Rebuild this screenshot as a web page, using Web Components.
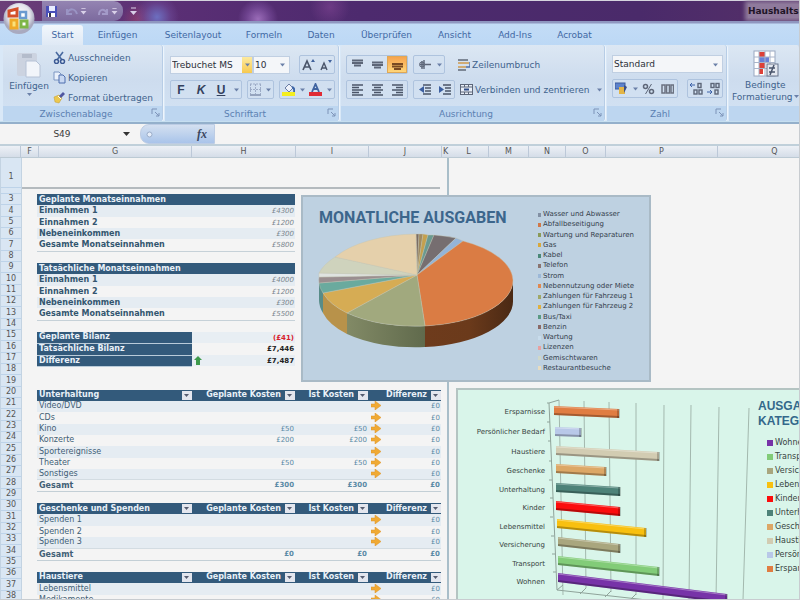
<!DOCTYPE html>
<html lang="de">
<head>
<meta charset="utf-8">
<title>Haushaltsbudget</title>
<style>
html, body { margin: 0; height: 100%; overflow: hidden; }
body { font-family: "DejaVu Sans", "Liberation Sans", sans-serif; font-size: 8px; background: #f4f4f4; color: #40628c; }
</style>
</head>
<body>
<app-window></app-window>
<script>
const define = (name, html, setup) => customElements.define(name, class extends HTMLElement {
  connectedCallback() {
    if (this.shadowRoot) return;
    const t = document.createElement('template');
    t.innerHTML = typeof html === 'function' ? html(this) : html;
    this.attachShadow({ mode: 'open' }).append(t.content.cloneNode(true));
    if (setup) setup(this);
  }
});
const rowHeight = n => n % 3 === 1 ? 12 : 11;
const reset = `*{box-sizing:border-box} button,select,input{font:inherit;color:inherit;border:0;background:none;padding:0;margin:0;appearance:none;border-radius:0} button{cursor:pointer}`;

/* Line and shape artwork of the ribbon */
const glyphs = {
  save: '<rect x="1" y="1" width="11" height="11" fill="#4a50b8"/><rect x="4" y="1" width="6" height="5" fill="#e8ecff"/><rect x="3" y="8" width="7" height="4" fill="#fff"/><rect x="4" y="8" width="2" height="4" fill="#334"/>',
  undo: '<path d="M2 4v5h5M2 8C5 3 10 3 12 9" fill="none" stroke="#9a94c4" stroke-width="2"/>',
  redo: '<path d="M11 4v5H6M11 8C8 3 3 4 3 10" fill="none" stroke="#a39ac8" stroke-width="2"/>',
  more: '<path d="M4 3h5" stroke="#d8d0e8" stroke-width="1"/><path d="M3 6h7L6.500 10z" fill="#d8d0e8"/>',
  down: '<path d="M4 5.500h5L6.500 8.500z" fill="#6b80a8"/>',
  cut: '<path d="M3 1l6 8M10 1L4 9" stroke="#4a6ba0" stroke-width="1.600"/><circle cx="3.500" cy="10.500" r="2" fill="none" stroke="#3b5994" stroke-width="1.500"/><circle cx="9.500" cy="10.500" r="2" fill="none" stroke="#3b5994" stroke-width="1.500"/>',
  copy: '<path d="M1 1h5l2 2v6H1z" fill="#e9f0fb" stroke="#7d96c2"/><path d="M6 4h4l2 2v6H6z" fill="#c8d8f2" stroke="#4f6fae"/>',
  brush: '<path d="M1 6l5-2 3 3-3 5-4-1z" fill="#ecc84e" stroke="#c09a30" stroke-width=".500"/><path d="M6 5l4-4 2 2-4 4z" fill="#4f56a0"/><path d="M5 5l3 3" stroke="#fff"/>',
  borders: '<path d="M1 1h11M1 6.500h11M1.500 1v10M6.500 1v10M11.500 1v10" stroke="#9cabc6" stroke-dasharray="2 1"/><path d="M1 12h11" stroke="#8090ac" stroke-width="1.500"/>',
  fill: '<path d="M3 5l4-4 4 4-4 4z" fill="#eef2fa" stroke="#6b7ea6"/><path d="M10 4q3 1 2 5" stroke="#3d66a8" stroke-width="2" fill="none"/><rect y="9" width="13" height="4" fill="#f4ee20"/>',
  fontcolor: '<path d="M3 9l3.500-8L10 9M4.500 6h4" fill="none" stroke="#3f63a0" stroke-width="1.800"/><rect y="9" width="13" height="4" fill="#e02b35"/>',
  grow: '<path d="M1 12L5 3l4 9M2.500 9h5" fill="none" stroke="#4a556a" stroke-width="1.700"/><path d="M9 4h4L11 1z" fill="#41629c"/>',
  shrink: '<path d="M2 12l3-7 3 7M3 10h4" fill="none" stroke="#4a556a" stroke-width="1.400"/><path d="M9 2h4l-2 3z" fill="#41629c"/>',
  top: '<path d="M1 2.500h11M1 5h11M3 7.500h7" stroke="#5d6678" stroke-width="2"/>',
  middle: '<path d="M1 4.500h11M1 7h11M3 9.500h7" stroke="#5d6678" stroke-width="2"/>',
  bottom: '<path d="M1 6h11M1 8.500h11M3 11h7" stroke="#7a4a22" stroke-width="2"/>',
  orient: '<path d="M2 6.500h4M4 3v8M6 2v9M7 6.500h6" stroke="#5d6678" stroke-width="1.400"/><circle cx="4" cy="6.500" r="2.500" fill="none" stroke="#5d6678"/>',
  left: '<path d="M1 2h11M1 4.500h7M1 7h11M1 9.500h7M1 12h11" stroke="#4b5568" stroke-width="1.500"/>',
  center: '<path d="M1 2h11M3 4.500h7M1 7h11M3 9.500h7M1 12h11" stroke="#4b5568" stroke-width="1.500"/>',
  right: '<path d="M1 2h11M5 4.500h7M1 7h11M5 9.500h7M1 12h11" stroke="#4b5568" stroke-width="1.500"/>',
  outdent: '<path d="M5 2h8M7 5h6M7 8h6M5 11h8" stroke="#4b5568" stroke-width="1.600"/><path d="M6 3v7L1 6.500z" fill="#3c5fa0"/>',
  indent: '<path d="M5 2h8M7 5h6M7 8h6M5 11h8" stroke="#4b5568" stroke-width="1.600"/><path d="M1 3v7l5-3.500z" fill="#3c5fa0"/>',
  wrap: '<path d="M1 2h10M1 12h8" stroke="#7d8796" stroke-width="1.800"/><path d="M1 5h11M1 9h8" stroke="#d09a4e" stroke-width="1.500"/><path d="M13 4v5h-4" stroke="#4d6ca4" fill="none" stroke-width="1.400"/>',
  merge: '<rect x=".500" y="1.500" width="12" height="10" fill="#e8eef8" stroke="#5c6679"/><path d="M1 4h12M1 9h12M4.500 1v3M8.500 1v3M4.500 9v3M8.500 9v3" stroke="#5c6679"/><path d="M4 6.500h5" stroke="#2f4c86" stroke-width="2"/>',
  currency: '<rect y="1" width="10" height="6" fill="#5c82cc" stroke="#3b5a9c"/><rect x="4" y="5" width="6" height="7" fill="#e3b546"/><path d="M9 3l3 2-3 6" fill="#3b4f86"/>',
  percent: '<circle cx="3.500" cy="4.500" r="2" fill="none" stroke="#5d6678" stroke-width="1.500"/><circle cx="9.500" cy="9.500" r="2" fill="none" stroke="#5d6678" stroke-width="1.500"/><path d="M9.500 2l-6 10" stroke="#5d6678"/>',
  thousand: '<g fill="none" stroke="#6b7280" stroke-width="1.500"><rect x="1" y="3" width="3" height="8"/><rect x="5.500" y="3" width="3" height="8"/><rect x="10" y="3" width="2.500" height="8"/></g>',
  decplus: '<path d="M0 3h5M2 1L0 3l2 2" stroke="#3c62a8" fill="none"/><g fill="none" stroke="#5d6678" stroke-width="1.400"><rect x="8" y="1.500" width="3" height="4"/><rect x="4" y="8" width="3" height="4"/><rect x="9" y="8" width="3" height="4"/></g>',
  decminus: '<path d="M0 10h5M3 8l2 2-2 2" stroke="#3c62a8" fill="none"/><g fill="none" stroke="#5d6678" stroke-width="1.400"><rect x="4" y="1.500" width="3" height="4"/><rect x="9" y="1.500" width="3" height="4"/><rect x="8" y="8" width="3" height="4"/></g>',
  launch: '<path d="M3 8V3h5M6 6l4 4M10 7v3H7" fill="none" stroke="#7d93b8"/>',
};
const glyph = n => `<svg width="13" height="13" viewBox="0 0 13 13" aria-hidden="true">${glyphs[n]}</svg>`;

/* Ribbon button: icon plus optional slotted caption */
define('tool-button', el => `<style>${reset}:host{display:flex;flex:none}svg{flex:none}
button{display:flex;align-items:center;justify-content:center;gap:2px;min-width:20px;height:17px;line-height:12px;white-space:nowrap}
:host([small]) button{min-width:10px;width:10px;overflow:hidden} :host([mid]) button{min-width:17px} :host([slim]) button{min-width:15px}
:host([active]) button{background:linear-gradient(#f6a04b,#ffd97c);box-shadow:inset 0 0 0 1px #e0a856}
:host([text]) button{color:#34425e;font:bold 12px "Liberation Sans",sans-serif}</style>
<button ${el.getAttribute('label') ? `aria-label="${el.getAttribute('label')}"` : ''}>${el.getAttribute('icon') ? glyph(el.getAttribute('icon')) : ''}<slot></slot></button>`);

define('tool-set', `<style>:host{display:flex;flex:none;align-items:center;border:1px solid #aec3de;border-radius:2px;background:#d3e1f280;height:19px;box-sizing:border-box}</style><slot></slot>`);

define('pick-list', el => `<style>${reset}:host{display:flex;background:#f4f6f9;height:18px;border:1px solid #c0cfe2;color:#2b2f38;box-sizing:border-box}
label{display:flex;flex:1;min-width:0}select{flex:1;min-width:0;padding-left:1px;height:16px;line-height:16px;outline:none}
span{display:flex;align-items:center;width:13px;flex:none}:host([hot]) span{background:linear-gradient(#fdeaa0,#f7c94f);width:10px;justify-content:center;overflow:hidden}svg{flex:none}</style>
<label><select aria-label="${el.getAttribute('label')}"><option>${el.getAttribute('value')}</option></select><span>${glyph('down')}</span></label>`);

define('ribbon-group', el => `<style>${reset}:host{display:flex;flex-direction:column;flex:none;box-sizing:border-box;border-right:1px solid #b7cde6;border-radius:3px;background:linear-gradient(#dce7f3,#cddcee 45%,#d3e3f4);box-shadow:1px 0 #eef5fc}
.body{flex:1;min-height:0;padding:4px 3px 0 5px}:host([plain]) .body{padding:4px 0 0 3px} footer{display:flex;align-items:center;height:15px;background:#bdd6f0;color:#5b80b2;line-height:12px}
footer span{flex:1;text-align:center}</style><div class="body"><slot></slot></div><footer><span>${el.getAttribute('label')}</span>${el.hasAttribute('plain') ? '' : `<button aria-label="Mehr">${glyph('launch')}</button>`}</footer>`);

define('title-bar', `<style>${reset}:host{display:flex;align-items:center;height:21px;flex:none;border-top:1px solid #d5d3de;box-sizing:border-box;padding-left:42px;
background:radial-gradient(circle at 157px 16px,#6d6fc0 0,#6d4c9a80 14px,transparent 22px),radial-gradient(circle at 138px 18px,#b0486a80 0,transparent 16px),radial-gradient(circle at 258px 18px,#9a6cb8 0,#8456a880 12px,transparent 20px),radial-gradient(circle at 330px 6px,#8a4a9a80 0,transparent 20px),linear-gradient(90deg,#6b3f78,#5b2f75 20%,#4d2a6e 45%,#4a2a6a 80%,#553068)}
nav{display:flex;align-items:center;height:20px;padding:0 3px;margin-right:4px;border-radius:0 9px 9px 0;background:linear-gradient(#9484b2,#7c6a9e);width:81px}
h1{margin:0 0 0 auto;width:51px;font:bold 9px/14px "DejaVu Sans",sans-serif;color:#1e1426;white-space:nowrap;overflow:hidden;background:#8f7a9c;box-shadow:0 0 4px 3px #8f7a9c;height:14px}
button{display:flex}.s{width:11px;overflow:hidden}.gap{margin-left:auto}</style>
<nav><button aria-label="Speichern">${glyph('save')}</button><button class="gap" aria-label="Rückgängig">${glyph('undo')}</button><button class="s" aria-label="Rückgängig-Liste">${glyph('more')}</button><button class="gap" aria-label="Wiederholen">${glyph('redo')}</button><button class="s" aria-label="Wiederholen-Liste">${glyph('more')}</button></nav>
<button aria-label="Symbolleiste anpassen">${glyph('more')}</button><h1>Haushaltsbudget</h1>`);

define('office-button', `<style>${reset}:host{position:absolute;left:3px;top:2px;z-index:2}button,svg{display:block}</style>
<button aria-label="Office"><svg width="33" height="33" viewBox="0 0 33 33"><defs><radialGradient id="g" cy=".4"><stop offset="0" stop-color="#fff"/><stop offset=".7" stop-color="#e4e4ec"/><stop offset="1" stop-color="#a9aabf"/></radialGradient></defs>
<circle cx="16" cy="16.500" r="15.500" fill="url(#g)"/><path d="M6 9l8-2v7H6z" fill="#fff" stroke="#d4502a" stroke-width="3"/><path d="M17 10h6v6h-6z" fill="#fff" stroke="#6a9ad0" stroke-width="2.500"/><path d="M8 18h6v8H8z" fill="#fbe27a" stroke="#f0aa28" stroke-width="3"/><path d="M18 19h6v6h-6z" fill="#fff" stroke="#7eb648" stroke-width="3"/></svg></button>`);

define('ribbon-tabs', `<style>${reset}:host{display:flex;height:24px;flex:none;align-items:flex-end;background:linear-gradient(#8f97c0 0,#8f97c0 2px,#c3dcf6 3px,#bcd8f5);padding-left:42px;font-size:9px}
button{height:20px;line-height:18px;flex:none;color:#3f68a4;white-space:nowrap} [aria-selected=true]{background:linear-gradient(#f2f7fc,#dfe9f5);border-radius:3px 3px 0 0}</style>
${[['Start', 41], ['Einfügen', 69], ['Seitenlayout', 82], ['Formeln', 60], ['Daten', 54], ['Überprüfen', 77], ['Ansicht', 59], ['Add-Ins', 62], ['Acrobat', 57]].map(([t, w], i) => `<button role="tab" aria-selected="${!i}" style="width:${w}px">${t}</button>`).join('')}`);

define('app-ribbon', `<style>${reset}:host{display:flex;flex:none;box-sizing:border-box;height:77px;padding-left:3px;gap:2px;background:#d9e8f7;border-bottom:1px solid #c6dff0;font-size:9px}
.row{display:flex;align-items:center;gap:5px;margin-top:6px}.clip{display:grid;grid-template-columns:45px 1fr}.list{display:grid;grid-auto-rows:20px;justify-items:start}
.paste{display:flex;flex-direction:column;align-items:center;padding-top:2px;line-height:10px;margin-left:-3px}.cond{display:flex;flex-direction:column;align-items:center;line-height:12px;white-space:nowrap}
.fonts{display:flex}svg{display:block}.end{margin-left:auto}.arrow{display:flex;align-items:center;gap:1px}</style>
<ribbon-group label="Zwischenablage" style="width:160px"><div class="clip">
<button class="paste"><svg width="30" height="30" viewBox="0 0 30 30"><rect x="3" y="2" width="20" height="23" rx="2" fill="#ccd3e0"/><path d="M8 3h10v4H8z" fill="#b4bccb"/><path d="M12 10h10l4 4v12H12z" fill="#f2f5fa" stroke="#b6c2d6"/></svg>Einfügen<svg width="7" height="7"><path d="M1 2h5L3.500 5z" fill="#6b80a8"/></svg></button>
<div class="list"><tool-button icon="cut">Ausschneiden</tool-button><tool-button icon="copy">Kopieren</tool-button><tool-button icon="brush">Format übertragen</tool-button></div></div></ribbon-group>
<ribbon-group label="Schriftart" style="width:174px">
<div class="row"><div class="fonts"><pick-list hot label="Schriftart" value="Trebuchet MS" style="width:83px"></pick-list><pick-list label="Schriftgrad" value="10" style="width:37px"></pick-list></div><tool-set class="end"><tool-button mid icon="grow" label="Schrift vergrößern"></tool-button><tool-button mid icon="shrink" label="Schrift verkleinern"></tool-button></tool-set></div>
<div class="row"><tool-set><tool-button text>F</tool-button><tool-button text><i>K</i></tool-button><tool-button text><u>U</u></tool-button><tool-button small icon="down" label="Unterstreichungsart"></tool-button></tool-set><tool-set><tool-button slim icon="borders" label="Rahmen"></tool-button><tool-button small icon="down" label="Rahmenliste"></tool-button></tool-set><tool-set class="end"><tool-button mid icon="fill" label="Füllfarbe"></tool-button><tool-button small icon="down" label="Füllfarben"></tool-button><tool-button mid icon="fontcolor" label="Schriftfarbe"></tool-button><tool-button small icon="down" label="Schriftfarben"></tool-button></tool-set></div></ribbon-group>
<ribbon-group label="Ausrichtung" style="width:264px">
<div class="row"><tool-set><tool-button icon="top" label="Oben"></tool-button><tool-button icon="middle" label="Mitte"></tool-button><tool-button active icon="bottom" label="Unten"></tool-button></tool-set><tool-set><tool-button icon="orient" label="Ausrichtung"></tool-button><tool-button small icon="down" label="Winkel"></tool-button></tool-set><tool-button icon="wrap" style="margin-left:7px">Zeilenumbruch</tool-button></div>
<div class="row"><tool-set><tool-button icon="left" label="Links"></tool-button><tool-button icon="center" label="Zentriert"></tool-button><tool-button icon="right" label="Rechts"></tool-button></tool-set><tool-set><tool-button icon="outdent" label="Einzug verkleinern"></tool-button><tool-button icon="indent" label="Einzug vergrößern"></tool-button></tool-set><tool-button icon="merge">Verbinden und zentrieren</tool-button><tool-button small class="end" icon="down" label="Verbinden-Liste"></tool-button></div></ribbon-group>
<ribbon-group label="Zahl" style="width:120px"><div class="row"><pick-list label="Zahlenformat" value="Standard" style="flex:1"></pick-list></div>
<div class="row"><tool-set><tool-button mid icon="currency" label="Währung"></tool-button><tool-button small icon="down" label="Währungen"></tool-button><tool-button mid icon="percent" label="Prozent"></tool-button><tool-button icon="thousand" label="Tausender"></tool-button></tool-set><tool-set class="end"><tool-button mid icon="decplus" label="Dezimalstelle hinzufügen"></tool-button><tool-button mid icon="decminus" label="Dezimalstelle löschen"></tool-button></tool-set></div></ribbon-group>
<ribbon-group plain label="" style="flex:1 0 70px"><button class="cond"><svg width="30" height="30" viewBox="0 0 30 30"><rect x="4" y="2" width="21" height="25" fill="#fff" stroke="#9aa8c0"/><path d="M9 3h6v5H9zM9 14h6v5H9zM9 20h4v5H9z" fill="#dd4038"/><path d="M9 8h10v5H9z" fill="#6a80d8"/><path d="M4 8h21M4 13.500h21M4 19.500h21M9 2v25M15 2v25M20 2v25" stroke="#a8b4ca"/><rect x="17" y="15" width="11" height="12" fill="#e4e8f0" stroke="#69748c"/><path d="M19 19h6M19 23h6M24 16l-4 10" stroke="#4a556c" stroke-width="1.500"/></svg><span>Bedingte</span><span class="arrow">Formatierung<svg width="5" height="4"><path d="M0 0h5L2.500 3z" fill="#6b80a8"/></svg></span></button></ribbon-group>`);

define('formula-bar', `<style>${reset}:host{display:flex;flex:none;box-sizing:border-box;height:24px;border-top:2px solid #94b0cb;border-bottom:2px solid #c0d0da;background:#f4f4f4;padding-left:2px}
input{font:9px "DejaVu Sans",sans-serif;color:#3a3a3a} .name{width:120px;text-align:center;outline:0}.dd{width:18px;display:flex;align-items:center}
.fx{width:75px;background:linear-gradient(#d4e0f0,#a9c4ea);border-radius:9px 0 0 9px;border:1px solid #bccce4;display:flex;align-items:center;justify-content:space-between;padding:0 7px 0 5px;font:italic bold 12px/14px "Liberation Serif",serif;color:#3a4760}
.val{flex:1;min-width:0;outline:0;padding-left:4px}</style><input class="name" aria-label="Namenfeld" value="S49"><button class="dd" aria-label="Namenliste"><svg width="9" height="6"><path d="M1 1h7L4.500 5z" fill="#333"/></svg></button>
<div class="fx"><svg width="7" height="7"><circle cx="3.500" cy="3.500" r="2.500" fill="#e6eefa" stroke="#9badc9"/></svg><button aria-label="Funktion einfügen">fx</button></div><input class="val" aria-label="Bearbeitungsleiste">`);

define('column-headings', `<style>:host{display:flex;flex:none;height:12px;background:linear-gradient(#edf1f6,#d5dde8);border-bottom:1px solid #bccad4;box-sizing:border-box;color:#555;line-height:11px}
span{flex:none;box-sizing:border-box;text-align:center;border-right:1px solid #bcc8d8}span:first-child{background:#a9c8ec}.k{border:0}span:last-child{flex:1 0 80px;padding-left:32px;border:0}</style>
${[['', 21], ['F', 18], ['G', 153], ['H', 104], ['I', 73], ['J', 73], ['K', 7], ['L', 40], ['M', 40], ['N', 37], ['O', 40], ['P', 112], ['Q', 80]].map(([t, w]) => `<span${t === 'K' ? ' class="k"' : ''} style="width:${w}px">${t}</span>`).join('')}`);

define('row-headings', `<style>:host{display:block;width:22px;background:#d9e6f3;color:#555;border-right:1px solid #c3d3e2;border-left:1px solid #c3d3e2;box-sizing:border-box}
div{box-sizing:border-box;border-bottom:1px solid #bdd3e9;text-align:center;line-height:10px;display:flex;justify-content:center;align-items:flex-end}</style>
<div style="height:30px;padding-bottom:5px">1</div><div style="height:6px"></div>
${Array.from({ length: 36 }, (_, i) => `<div style="height:${rowHeight(i + 3)}px">${i + 3}</div>`).join('')}`);

/* Cell blocks; "start" is the sheet row of the first table row */
const tableCss = `${reset}table{border-collapse:collapse;table-layout:fixed;width:100%}td,th{padding:0 1px 0 2px;line-height:10px;text-align:left;white-space:nowrap;vertical-align:middle;overflow:hidden;height:inherit}
td+td,th+th{text-align:right}th{background:#335a7b;color:#e9f1f8}tr:nth-child(even) td{background:#e5ecf2}td{color:#426076;font-weight:normal}td+td,th+td{font-size:7px}`;
define('income-table', el => {
  const s = +el.getAttribute('start'), d = JSON.parse(el.getAttribute('rows'));
  return `<style>${tableCss}:host{display:block;width:258px;border-bottom:1px solid #c6d1d8;box-sizing:border-box}td:first-child{font-weight:bold;color:#33566f}td+td{font-style:italic;color:#7a868e}</style>
<table><tr style="height:${rowHeight(s)}px"><th colspan="2">${el.getAttribute('heading')}</th></tr>${d.map((r, i) => `<tr style="height:${rowHeight(s + 1 + i)}px"><td>${r[0]}</td><td>${r[1]}</td></tr>`).join('')}</table>`;
});
define('balance-table', el => {
  const s = +el.getAttribute('start'), d = [['Geplante Bilanz', '(£41)'], ['Tatsächliche Bilanz', '£7,446'], ['Differenz', '£7,487']];
  return `<style>${tableCss}:host{display:block;width:258px}th{width:155px;border-bottom:1px solid #b9cbd9}td{font-weight:bold;color:#222}tr td,tr:nth-child(even) td{background:#e8eef3;text-align:right}tr:nth-child(even) td{background:#f4f4f4}tr:first-child td{color:#d8202c}svg{float:left}</style>
<table>${d.map((r, i) => `<tr style="height:${rowHeight(s + i)}px"><th scope="row">${r[0]}</th><td>${i === 2 ? '<svg width="8" height="9" viewBox="0 0 8 9"><path d="M4 0l4 4H6v5H2V4H0z" fill="#3f9a4c"/></svg>' : ''}${r[1]}</td></tr>`).join('')}</table>`;
});
define('cost-table', el => {
  const s = +el.getAttribute('start'), d = JSON.parse(el.getAttribute('rows'));
  const f = '<button aria-label="Filter"><svg width="9" height="9"><path d="M2 3h5L4.500 6z" fill="#555c70"/></svg></button>';
  const arrow = '<svg width="10" height="9" viewBox="0 0 10 9"><path d="M0 3h4V0l6 4.500L4 9V6H0z" fill="#f0aa34" stroke="#dc9226" stroke-width=".5"/></svg>';
  const head = (t, w) => `<th style="width:${w}px"><div><span>${t}</span>${f}</div></th>`;
  return `<style>${tableCss}:host{display:block;width:404px}th{padding-right:0}th div{display:flex;align-items:center}th span{flex:1;padding-right:4px}button{width:10px;height:9px;background:#e3e6ee;flex:none}button svg,td svg{display:block}td svg{float:left;margin-left:1px}
td+td{color:#5a8aa6}.sum td{font-weight:bold;border-top:1px solid #d3dce2;border-bottom:1px solid #c3cfd6;background:#f4f4f4!important;line-height:9px}</style>
<table><tr style="height:${rowHeight(s)}px">${head(el.getAttribute('heading'), 155)}${head('Geplante Kosten', 103)}${head('Ist Kosten', 73)}${head('Differenz', 73)}</tr>
${d.map((r, i) => `<tr style="height:${rowHeight(s + 1 + i)}px"${r[0] === 'Gesamt' ? ' class="sum"' : ''}><td>${r[0]}</td><td>${r[1]}</td><td>${r[2]}</td><td>${r[0] === 'Gesamt' ? '' : arrow}${r[3]}</td></tr>`).join('')}</table>`;
});
define('blank-rows', el => {
  const s = +el.getAttribute('start'), n = +el.getAttribute('count');
  let h = 0; for (let i = 0; i < n; i++) h += rowHeight(s + i);
  return `<style>:host{display:block;height:${h}px}</style>`;
});

/* Tilted pie with a solid rim */
define('pie-chart', () => {
  const rim = [[416, 234], [419, 234], [423, 234], [428, 235], [434, 235], [456, 238], [463, 241], [425, 326], [347, 313], [323, 293], [319, 283], [319, 277], [319, 273], [335, 257], [416, 234]];
  const fill = ['#7b6b62', '#a08a60', '#c4a04e', '#6a9a90', '#766e70', '#94b4d8', '#da7c44', '#a1a97e', '#d6ac54', '#6aaa9e', '#9a8e90', '#dfe3e0', '#cfd3bd', '#e5d0ab'];
  const legend = [['Wasser und Abwasser', '#8290a4'], ['Abfallbeseitigung', '#d07848'], ['Wartung und Reparaturen', '#8a9a58'], ['Gas', '#d8a83c'], ['Kabel', '#4a8878'], ['Telefon', '#8a7470'], ['Strom', '#9cb8d8'], ['Nebennutzung oder Miete', '#e08850'], ['Zahlungen für Fahrzeug 1', '#a0a868'], ['Zahlungen für Fahrzeug 2', '#e0b040'], ['Bus/Taxi', '#5a9a84'], ['Benzin', '#8a6a68'], ['Wartung', '#c8dcec'], ['Lizenzen', '#e8a0a0'], ['Gemischtwaren', '#d0d8c8'], ['Restaurantbesuche', '#e8dcc0']];
  return `<style>:host{display:grid;grid-template-columns:235px 1fr;box-sizing:border-box;border:2px solid #a9bac6;background:#bed1e1;width:350px;height:187px;color:#34404c}
h2{margin:12px 0 0 16px;font:bold 16px/17px Roboto,"Liberation Sans",sans-serif;color:#3c668c;white-space:nowrap}svg{display:block;margin:4px 0 0 12px}
ul{list-style:none;margin:13px 0 7px;padding:0;display:flex;flex-direction:column;justify-content:space-between;font-size:7px;line-height:9px;white-space:nowrap}li{display:flex;align-items:center;gap:2px}i{width:3px;height:4px}</style>
<div><h2>MONATLICHE AUSGABEN</h2><svg width="204" height="120" viewBox="315 230 204 120"><defs><linearGradient id="o"><stop stop-color="#6e3b1c"/><stop offset=".5" stop-color="#6b3a1b"/><stop offset="1" stop-color="#4a2914"/></linearGradient><linearGradient id="v"><stop stop-color="#828a66"/><stop offset="1" stop-color="#606a4c"/></linearGradient></defs>
<path d="M513 280v20A97 46 0 0 1 425 347V326A97 46 0 0 0 513 280z" fill="url(#o)"/><path d="M425 326v21A97 46 0 0 1 347 334V313A97 46 0 0 0 425 326z" fill="url(#v)"/><path d="M347 313v21A97 46 0 0 1 323 313V293A97 46 0 0 0 347 313z" fill="#b8924a"/><path d="M323 293v20A97 46 0 0 1 319 300V280z" fill="#588c88"/>
${fill.map((c, i) => `<path d="M417 275L${rim[i]}A97 46 0 ${i === 6 ? '0 1 513,280A97 46 0 0' : 0} 1 ${rim[i + 1]}z" fill="${c}" stroke="#c6c6b0" stroke-width=".4"/>`).join('')}</svg></div>
<ul>${legend.map(([t, c]) => `<li><i style="background:${c}"></i>${t}</li>`).join('')}</ul>`;
});

define('bar-chart', () => {
  const bars = [['Ersparnisse', 554, 410, 619, 413, '#e07d42'], ['Persönlicher Bedarf', 555, 431, 581, 432, '#b8c8e8'], ['Haustiere', 556, 450, 659, 456, '#d2ccb2'], ['Geschenke', 556, 468, 606, 471, '#dca766'], ['Unterhaltung', 556, 487, 620, 491, '#4d8278'], ['Kinder', 556, 505, 620, 511, '#fb0d0d'], ['Lebensmittel', 557, 523, 646, 532, '#f8c010'], ['Versicherung', 558, 541, 620, 548, '#a9a67e'], ['Transport', 558, 560, 659, 571, '#82cc78'], ['Wohnen', 558, 577, 727, 598, '#7733a8']];
  const legendNames = ['Wohnen', 'Transport', 'Versicherung', 'Lebensmittel', 'Kinder', 'Unterhaltung', 'Geschenke', 'Haustiere', 'Persönlicher Bedarf', 'Ersparnisse'];
  const grid = [[559, 400, 563, 595], [584, 401, 586, 588], [609, 402, 611, 592], [636, 403, 636, 595], [664, 405, 663, 600], [691, 405, 689, 600], [719, 407, 716, 600], [749, 408, 743, 600]];
  return `<style>:host{display:flex;box-sizing:border-box;border:2px solid #b4c4c2;border-width:2px 0 0 2px;background:#d9f5ea;overflow:hidden;color:#38443f}svg{display:block;flex:none}
aside{flex:none;white-space:nowrap}h2{margin:9px 0 7px;font:bold 12px/15px "Liberation Sans",sans-serif;color:#33688a}ul{list-style:none;margin:0;padding:0 0 0 9px;font-size:8px;line-height:14px}li{display:flex;align-items:center;gap:2px}i{width:6px;height:6px}text{font:7px "DejaVu Sans",sans-serif;fill:#38443f}</style>
<svg width="300" height="210" viewBox="458 390 300 210">${grid.map(g => `<path d="M${g[0]} ${g[1]}L${g[2]} ${g[3]}" stroke="#a3b8ae"/>`).join('')}<path d="M559 400l-10 3 8 187 90 10M549 403h-2M550 422h-3M551 441h-3M552 461h-3M552 480h-3M553 498h-3M553 517h-3M554 536h-3M555 554h-3M556 572h-3M557 590l6-5M580 594l6-6M605 597l6-6M630 600l6-6" fill="none" stroke="#8fa39a"/>
${bars.map(([t, a, b, c, d, k], i) => `<path d="M${a} ${b - 4}L${c} ${d - 4}V${d + 5}L${a} ${b + 5}z" fill="${k}"/><path d="M${a} ${b + 3}L${c} ${d + 3}v2L${a} ${b + 5}z" fill="#0004"/><path d="M${a} ${b - 3}L${c} ${d - 3}" stroke="#fff5"/><path d="M${c - 2} ${d - 4}h3v9h-3z" fill="#0003"/><text x="545" y="${[414, 434, 454, 473, 492, 510, 529, 547, 566, 584][i]}" text-anchor="end">${t}</text>`).join('')}</svg>
<aside><h2>AUSGABEN NACH<br>KATEGORIE</h2><ul>${legendNames.map(t => `<li><i style="background:${bars.find(b => b[0] === t)[5]}"></i>${t}</li>`).join('')}</ul></aside>`;
});

define('work-sheet', `<style>:host{display:flex;position:relative;flex:1;min-height:0;overflow:hidden;background:#f4f4f4}row-headings{flex:none}
.cells{width:427px;flex:none;border-right:2px solid #a9bec9;box-sizing:border-box}.banner{height:31px;border-bottom:2px solid #b4babe;box-sizing:border-box;margin-right:7px}.area{padding:5px 0 0 15px}
pie-chart{position:absolute;left:301px;top:37px}bar-chart{position:absolute;left:456px;right:0;top:230px;bottom:0}</style>
<row-headings></row-headings><div class="cells"><div class="banner"></div><div class="area">
<income-table start="3" heading="Geplante Monatseinnahmen" rows='[["Einnahmen 1","£4300"],["Einnahmen 2","£1200"],["Nebeneinkommen","£300"],["Gesamte Monatseinnahmen","£5800"]]'></income-table><blank-rows start="8" count="1"></blank-rows>
<income-table start="9" heading="Tatsächliche Monatseinnahmen" rows='[["Einnahmen 1","£4000"],["Einnahmen 2","£1200"],["Nebeneinkommen","£300"],["Gesamte Monatseinnahmen","£5500"]]'></income-table><blank-rows start="14" count="1"></blank-rows>
<balance-table start="15"></balance-table><blank-rows start="18" count="2"></blank-rows>
<cost-table start="20" heading="Unterhaltung" rows='[["Video/DVD","","","£0"],["CDs","","","£0"],["Kino","£50","£50","£0"],["Konzerte","£200","£200","£0"],["Sportereignisse","","","£0"],["Theater","£50","£50","£0"],["Sonstiges","","","£0"],["Gesamt","£300","£300","£0"]]'></cost-table><blank-rows start="29" count="1"></blank-rows>
<cost-table start="30" heading="Geschenke und Spenden" rows='[["Spenden 1","","","£0"],["Spenden 2","","","£0"],["Spenden 3","","","£0"],["Gesamt","£0","£0","£0"]]'></cost-table><blank-rows start="35" count="1"></blank-rows>
<cost-table start="36" heading="Haustiere" rows='[["Lebensmittel","","","£0"],["Medikamente","","","£0"]]'></cost-table>
</div></div><pie-chart></pie-chart><bar-chart></bar-chart>`);

define('app-window', `<style>:host{display:flex;flex-direction:column;height:100vh;position:relative;overflow:hidden;box-sizing:border-box;border:solid #c8ccd0;border-width:0 1px 1px 0}</style>
<title-bar></title-bar><office-button></office-button><ribbon-tabs></ribbon-tabs><app-ribbon></app-ribbon><formula-bar></formula-bar><column-headings></column-headings><work-sheet></work-sheet>`);
</script>
</body>
</html>
